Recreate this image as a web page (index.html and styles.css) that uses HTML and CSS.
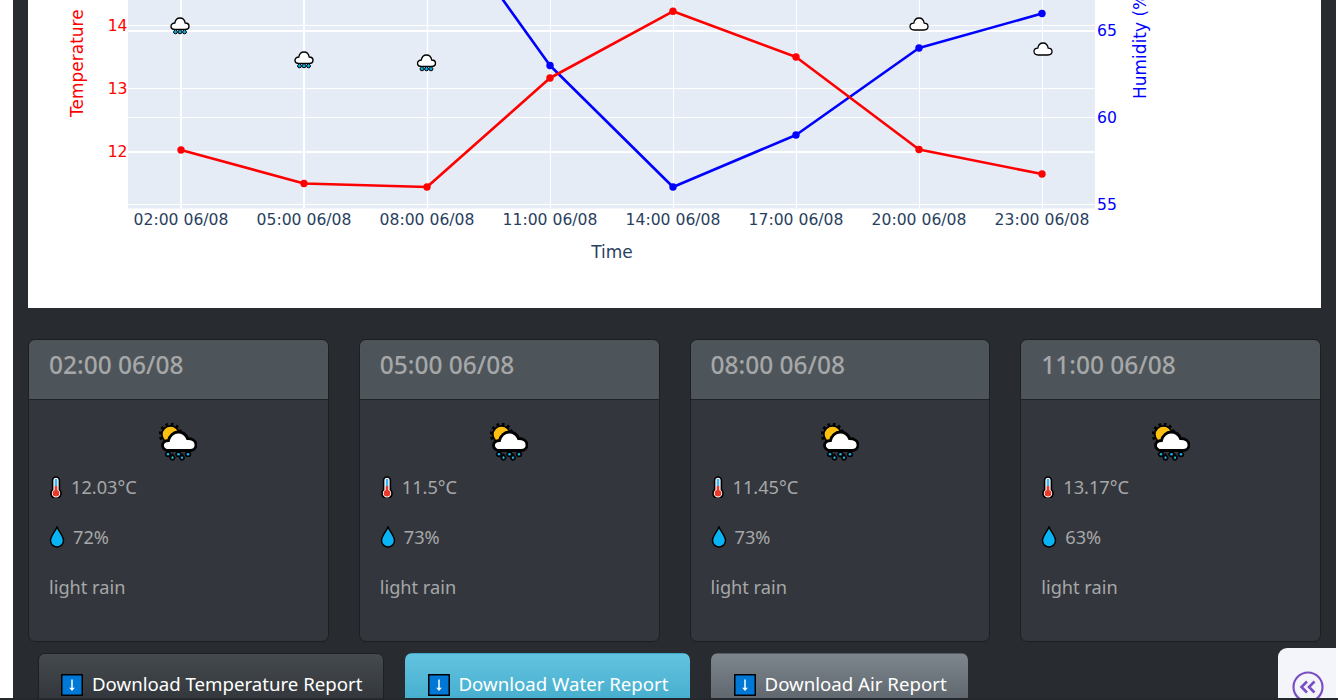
FILE: index.html
```html
<!DOCTYPE html>
<html lang="en">
<head>
<meta charset="utf-8">
<title>Weather dashboard</title>
<link rel="stylesheet" href="styles.css">
</head>
<body>
<svg class="defs" width="0" height="0" aria-hidden="true">
  <defs>
    <symbol id="mini-cloud" viewBox="0 0 20 14">
      <path d="M5 13C2.500 13 1 11.500 1 9.600 1 7.600 2.600 6.200 4.800 6.200 5.300 3.200 7.400 1 10 1c2.600 0 4.700 2.200 5.200 5.200 2.200 0 3.800 1.400 3.800 3.400 0 1.900-1.500 3.400-4 3.400Z" fill="#fff" stroke="#000" stroke-width="1.300"/>
    </symbol>
    <symbol id="mini-rain" viewBox="0 0 20 18">
      <path d="M5 12.500C2.500 12.500 1 11.300 1 9.300 1 7.400 2.600 6 4.800 6 5.300 3.100 7.400 1 10 1c2.600 0 4.700 2.100 5.200 5 2.200 0 3.800 1.400 3.800 3.300 0 2-1.500 3.200-4 3.200Z" fill="#fff" stroke="#000" stroke-width="1.400"/>
      <g fill="#08a8d8" stroke="#000" stroke-width="1">
        <path d="M5.500 12 7.500 14.800a2 2 0 1 1-4 0Z"/>
        <path d="M10 12 12 14.800a2 2 0 1 1-4 0Z"/>
        <path d="M14.500 12 16.500 14.800a2 2 0 1 1-4 0Z"/>
      </g>
    </symbol>
    <symbol id="sun-rain" viewBox="0 0 38 38">
      <circle cx="11.500" cy="11.500" r="9.500" fill="#000"/>
      <circle cx="11.500" cy="11.500" r="10.300" fill="none" stroke="#000" stroke-width="3" stroke-dasharray="2.600 2.800"/>
      <circle cx="11.500" cy="11.500" r="7.800" fill="#fdc010"/>
      <path d="M9.500 27.500C6 27.500 3.500 25 3.500 22.500 3.500 19.500 6 17.500 9.500 17.500 10.500 13 14.500 9 19 9c4.500 0 8 2.500 9.500 6.500 5 0 8.500 2.500 8.500 6.500 0 3-2.500 5.500-6 5.500Z" fill="#fff" stroke="#000" stroke-width="2.800"/>
      <g fill="#12b0e8" stroke="#000" stroke-width="1.700">
        <path d="M9 27.500 11.400 31a2.400 2.400 0 1 1-4.800 0Z"/>
        <path d="M13.500 31.500 15.700 34.600a2.200 2.200 0 1 1-4.400 0Z"/>
        <path d="M19.500 27.500 21.900 31a2.400 2.400 0 1 1-4.800 0Z"/>
        <path d="M23 31.500 25.200 34.600a2.200 2.200 0 1 1-4.400 0Z"/>
        <path d="M29 27.500 31.400 31a2.400 2.400 0 1 1-4.800 0Z"/>
      </g>
    </symbol>
    <symbol id="thermo" viewBox="0 0 14 22">
      <path d="M7 1a3.400 3.400 0 0 0-3.400 3.400v9.300a5 5 0 1 0 6.800 0V4.400A3.400 3.400 0 0 0 7 1Z" fill="#fff" stroke="#000" stroke-width="1.600"/>
      <rect x="5.700" y="3" width="2.600" height="7" fill="#3fb4ec"/>
      <rect x="5.700" y="10" width="2.600" height="6" fill="#e8392b"/>
      <circle cx="7" cy="17.200" r="3.300" fill="#e8392b"/>
    </symbol>
    <symbol id="drop" viewBox="0 0 16 22">
      <path d="M8 1C6.500 5 1.500 10 1.500 14.500a6.500 6.500 0 0 0 13 0C14.500 10 9.500 5 8 1Z" fill="#08b4f4" stroke="#000" stroke-width="1.500"/>
    </symbol>
    <symbol id="down" viewBox="0 0 22 22">
      <rect x=".75" y=".75" width="20.500" height="20.500" fill="#0078d7" stroke="#000" stroke-width="1.500"/>
      <path d="M11 5.500V16" stroke="#fff" stroke-width="1.500" fill="none"/>
      <path d="M8.200 13.800 11 17l2.800-3.200Z" fill="#fff"/>
    </symbol>
  </defs>
</svg>

<main class="page">
  <section class="chart">
    <svg class="plot" width="1293" height="308" viewBox="28 0 1293 308">
      <rect class="plot-bg" x="128" y="0" width="967" height="208.500"/>
      <g class="grid">
        <path d="M128 25.500H1095M128 88.500H1095M128 117.500H1095M128 204.500H1095"/>
        <path d="M550.500 0V208M673.500 0V208M796.500 0V208M919.500 0V208M1042.500 0V208"/>
      </g>
      <g class="grid grid-thick">
        <path d="M128 31H1095M128 152H1095"/>
        <path d="M181 0V208M304 0V208"/>
      </g>
      <path class="grid grid-mid" d="M427.500 0V208"/>

      <g class="tick-x">
        <text x="181" y="225">02:00 06/08</text>
        <text x="304" y="225">05:00 06/08</text>
        <text x="427" y="225">08:00 06/08</text>
        <text x="550" y="225">11:00 06/08</text>
        <text x="673" y="225">14:00 06/08</text>
        <text x="796" y="225">17:00 06/08</text>
        <text x="919" y="225">20:00 06/08</text>
        <text x="1042" y="225">23:00 06/08</text>
      </g>
      <text class="axis-x" x="612" y="258">Time</text>

      <g class="tick-left">
        <text x="127.500" y="31">14</text>
        <text x="127.500" y="94">13</text>
        <text x="127.500" y="157">12</text>
      </g>
      <text class="axis-left" transform="translate(83 117) rotate(-90)">Temperature</text>

      <g class="tick-right">
        <text x="1097" y="36">65</text>
        <text x="1097" y="123">60</text>
        <text x="1097" y="210">55</text>
      </g>
      <text class="axis-right" transform="translate(1146 99) rotate(-90)">Humidity (%)</text>

      <polyline class="line line-blue" points="427,-106 550,65.500 673,187 796,135 919,48 1042,13.500"/>
      <g class="dots-blue">
        <circle cx="550" cy="65.500" r="3.700"/><circle cx="673" cy="187" r="3.700"/><circle cx="796" cy="135" r="3.700"/><circle cx="919" cy="48" r="3.700"/><circle cx="1042" cy="13.500" r="3.700"/>
      </g>
      <polyline class="line line-red" points="181,150 304,183.500 427,187 550,78 673,11.300 796,57 919,149.500 1042,174"/>
      <g class="dots-red">
        <circle cx="181" cy="150" r="3.700"/><circle cx="304" cy="183.500" r="3.700"/><circle cx="427" cy="187" r="3.700"/><circle cx="550" cy="78" r="3.700"/><circle cx="673" cy="11.300" r="3.700"/><circle cx="796" cy="57" r="3.700"/><circle cx="919" cy="149.500" r="3.700"/><circle cx="1042" cy="174" r="3.700"/>
      </g>

      <use href="#mini-rain" x="170" y="17" width="20" height="18"/>
      <use href="#mini-rain" x="294" y="51" width="20" height="18"/>
      <use href="#mini-rain" x="416.500" y="54" width="20" height="18"/>
      <use href="#mini-cloud" x="909" y="17" width="20" height="14"/>
      <use href="#mini-cloud" x="1033" y="42" width="20" height="14"/>
    </svg>
  </section>

  <section class="cards">
    <article class="card">
      <header class="card-head">02:00 06/08</header>
      <div class="card-body">
        <svg class="weather"><use href="#sun-rain"/></svg>
        <p class="row"><svg class="ic-thermo"><use href="#thermo"/></svg>12.03°C</p>
        <p class="row"><svg class="ic-drop"><use href="#drop"/></svg>72%</p>
        <p class="row">light rain</p>
      </div>
    </article>
    <article class="card">
      <header class="card-head">05:00 06/08</header>
      <div class="card-body">
        <svg class="weather"><use href="#sun-rain"/></svg>
        <p class="row"><svg class="ic-thermo"><use href="#thermo"/></svg>11.5°C</p>
        <p class="row"><svg class="ic-drop"><use href="#drop"/></svg>73%</p>
        <p class="row">light rain</p>
      </div>
    </article>
    <article class="card">
      <header class="card-head">08:00 06/08</header>
      <div class="card-body">
        <svg class="weather"><use href="#sun-rain"/></svg>
        <p class="row"><svg class="ic-thermo"><use href="#thermo"/></svg>11.45°C</p>
        <p class="row"><svg class="ic-drop"><use href="#drop"/></svg>73%</p>
        <p class="row">light rain</p>
      </div>
    </article>
    <article class="card">
      <header class="card-head">11:00 06/08</header>
      <div class="card-body">
        <svg class="weather"><use href="#sun-rain"/></svg>
        <p class="row"><svg class="ic-thermo"><use href="#thermo"/></svg>13.17°C</p>
        <p class="row"><svg class="ic-drop"><use href="#drop"/></svg>63%</p>
        <p class="row">light rain</p>
      </div>
    </article>
  </section>

  <section class="actions">
    <a class="btn btn-dark"><svg class="ic-down"><use href="#down"/></svg>Download Temperature Report</a>
    <a class="btn btn-info"><svg class="ic-down"><use href="#down"/></svg>Download Water Report</a>
    <a class="btn btn-gray"><svg class="ic-down"><use href="#down"/></svg>Download Air Report</a>
  </section>
</main>

<aside class="side-toggle">
  <svg class="toggle-icon" width="32" height="32" viewBox="0 0 32 32">
    <circle cx="16" cy="16" r="14.500"/>
    <path d="M15 10.500 9.500 16l5.500 5.500M22.500 10.500 17 16l5.500 5.500"/>
  </svg>
</aside>
<div class="edge"></div>
</body>
</html>
```

FILE: styles.css
```css
* { box-sizing: border-box; }

html, body {
  margin: 0;
  height: 700px;
  overflow: hidden;
  background: #fff;
}

body { position: relative; }

.defs { position: absolute; }

.page {
  margin: 0 2px 0 13px;
  height: 700px;
  padding: 0 15px;
  background: #282b2f;
  font-family: "Noto Sans", sans-serif;
}

/* chart */
.chart { height: 308px; background: #fff; }
.plot { display: block; overflow: hidden; font-family: "DejaVu Sans", sans-serif; }
.plot-bg { fill: #e5ecf6; }

.grid path, .grid-mid { stroke: #fff; stroke-width: 1; fill: none; }
.grid-thick path { stroke-width: 2; }
.grid-mid { stroke-width: 1.5; }

.tick-x text { font-size: 15.6px; fill: #2a3f5f; text-anchor: middle; }
.axis-x { font-size: 17px; fill: #2a3f5f; text-anchor: middle; }
.tick-left text { font-size: 15.6px; fill: #f00; text-anchor: end; }
.axis-left { font-size: 17px; fill: #f00; }
.tick-right text { font-size: 15.6px; fill: #00f; }
.axis-right { font-size: 17px; fill: #00f; }

.line { fill: none; stroke-width: 2.600; stroke-linejoin: round; }
.line-red { stroke: #f00; }
.line-blue { stroke: #00f; }
.dots-red { fill: #f00; }
.dots-blue { fill: #00f; }

/* cards */
.cards {
  display: grid;
  grid-template-columns: repeat(4, 1fr);
  gap: 30px;
  margin-top: 31px;
}

.card {
  height: 303px;
  background: #33373d;
  border: 1px solid #1c1e21;
  border-radius: 7px;
  color: #a6a7a8;
  overflow: hidden;
}

.card-head {
  height: 60px;
  padding: 0 20px;
  background: #4e555a;
  border-bottom: 1px solid #1f2226;
  font-size: 24.5px;
  font-weight: 500;
  line-height: 50px;
}

.card-body {
  display: flex;
  flex-direction: column;
  padding: 23px 20px 0;
}

.weather { width: 38px; height: 38px; margin: 0 auto 13px; display: block; }

.row {
  display: flex;
  align-items: center;
  gap: 8px;
  height: 26px;
  margin: 0 0 24px;
  font-size: 18.2px;
  line-height: 26px;
}

.ic-thermo { width: 14px; height: 22px; flex: none; }
.ic-drop { width: 16px; height: 22px; flex: none; }

/* buttons */
.actions {
  display: flex;
  gap: 21px;
  margin-top: 11px;
  padding-left: 10px;
}

.btn {
  display: flex;
  align-items: flex-start;
  gap: 9px;
  height: 60px;
  padding: 20px 20px 0 22px;
  border: 1px solid transparent;
  border-radius: 7px;
  color: #fff;
  font-size: 18.65px;
  line-height: 20px;
  white-space: nowrap;
}

.btn-dark { background: linear-gradient(#454a4f, #2e3236); border-color: #1e2023; }
.btn-info { background: linear-gradient(#63c3df, #3fa9ca); }
.btn-gray { background: linear-gradient(#7e868d, #575e65); }

.ic-down { width: 22px; height: 22px; flex: none; }

/* overlays */
.side-toggle {
  position: absolute;
  left: 1278px;
  top: 648px;
  width: 58px;
  height: 50px;
  background: #f4f4fb;
  border-top-left-radius: 9px;
  padding: 23px 0 0 14px;
  overflow: hidden;
}

.toggle-icon { display: block; fill: none; stroke: #7b4fc4; stroke-width: 2.200; }
.toggle-icon path { stroke-width: 2.600; }

.edge {
  position: absolute;
  left: 0;
  right: 0;
  top: 698px;
  height: 2px;
  background: #25282c;
}
```
